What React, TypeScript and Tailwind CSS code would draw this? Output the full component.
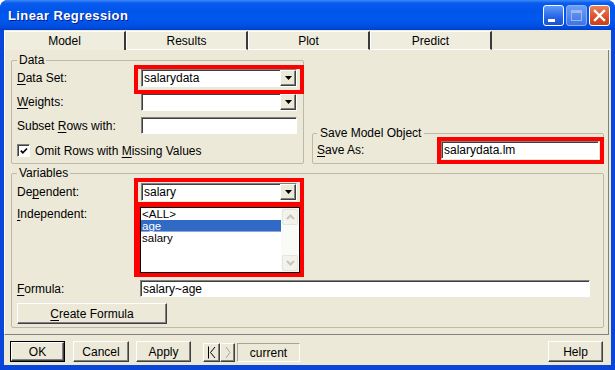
import React from 'react';

type P = { children?: React.ReactNode; className?: string };

// classic 3D edges
const raised =
  'border border-t-white border-l-white border-b-[#404040] border-r-[#404040] shadow-[inset_-1px_-1px_0_#808080]';

function U({ children }: P) {
  return <span className="underline decoration-1 underline-offset-[2px]">{children}</span>;
}

function Sunken({ children, className = '' }: P) {
  return (
    <div className={`border border-t-[#808080] border-l-[#808080] border-b-white border-r-white ${className}`}>
      <div className="flex h-full w-full border-t border-l border-t-[#404040] border-l-[#404040] bg-white">
        {children}
      </div>
    </div>
  );
}

function Combo({ value = '', className = '' }: { value?: string; className?: string }) {
  return (
    <div className={`flex h-[18px] w-[156px] border border-t-[#808080] border-l-[#808080] border-b-white border-r-white bg-white ${className}`}>
      <div className="flex-1 border-t border-l border-t-[#404040] border-l-[#404040] pl-[1px] leading-[15px]">
        {value}
      </div>
      <div className={`flex h-[16px] w-[16px] items-center justify-center bg-[#ece9d8] ${raised}`}>
        <svg width="7" height="4" viewBox="0 0 7 4">
          <polygon points="0,0 7,0 3.5,4" fill="#000" />
        </svg>
      </div>
    </div>
  );
}

function Btn({ children, className = '', def = false }: P & { def?: boolean }) {
  if (def) {
    return (
      <div className={`h-[21px] border border-black ${className}`}>
        <div className={`flex h-full w-full items-center justify-center bg-[#ece9d8] ${raised}`}>{children}</div>
      </div>
    );
  }
  return (
    <div className={`flex h-[21px] items-center justify-center bg-[#ece9d8] ${raised} ${className}`}>
      {children}
    </div>
  );
}

function RedMark({ className = '' }: P) {
  return <div className={`pointer-events-none absolute border-4 border-[#ff0000] ${className}`} />;
}

function ScrollArrow({ up }: { up?: boolean }) {
  return (
    <div className="flex h-[16px] w-[16px] items-center justify-center rounded-[2px] border border-[#e6e4dc] bg-[#f3f3ee]">
      <svg width="9" height="6" viewBox="0 0 9 6">
        <polyline
          points={up ? '1,5 4.5,1.5 8,5' : '1,1 4.5,4.5 8,1'}
          fill="none"
          stroke="#c7c5b8"
          strokeWidth="2"
        />
      </svg>
    </div>
  );
}

function ListBox() {
  const item = 'h-[12px] overflow-hidden pl-[1px] text-[11.5px] leading-[12px]';
  return (
    <div className="flex h-[66px] w-[160px] border border-black bg-white">
      <div className="flex-1">
        <div className={item}>&lt;ALL&gt;</div>
        <div className={`${item} bg-[#316ac5] text-white shadow-[inset_0_-1px_0_#8aa6da]`}>age</div>
        <div className={item}>salary</div>
      </div>
      <div className="flex w-[18px] flex-col justify-between bg-[#fafaf7] py-[1px] pl-[1px]">
        <ScrollArrow up />
        <ScrollArrow />
      </div>
    </div>
  );
}

function TitleBar() {
  return (
    <div className="flex h-[30px] items-center bg-[linear-gradient(180deg,#3d8cf7_0%,#0a5bf0_10%,#0055ea_35%,#0058ee_65%,#004ee0_88%,#0040c8_100%)] pl-[8px] pr-[5px]">
      <div className="mt-[1px] flex-1 text-[13px] font-bold tracking-[0.4px] text-white [text-shadow:1px_1px_0_#0a1a8a]">
        Linear Regression
      </div>
      <div className="flex gap-[2px]">
        <div className="relative h-[21px] w-[21px] rounded-[3px] border border-white bg-[linear-gradient(180deg,#5c9cfb,#2663e6_60%,#1b53d4)]">
          <div className="absolute left-[4px] top-[13px] h-[3px] w-[7px] bg-white" />
        </div>
        <div className="flex h-[21px] w-[21px] items-center justify-center rounded-[3px] border border-[#8fb0f0] bg-[linear-gradient(180deg,#6b9ef5,#3f74e6)]">
          <div className="h-[11px] w-[11px] border border-t-[3px] border-[#9cb8ef]" />
        </div>
        <div className="flex h-[21px] w-[21px] items-center justify-center rounded-[3px] border border-white bg-[linear-gradient(180deg,#e9825d,#d9502a_60%,#c8401c)]">
          <svg width="13" height="13" viewBox="0 0 13 13">
            <path d="M2 2L11 11M11 2L2 11" stroke="#fff" strokeWidth="2.4" strokeLinecap="square" />
          </svg>
        </div>
      </div>
    </div>
  );
}

function Tabs() {
  const tab = 'flex h-[19px] items-center justify-center border-t border-l border-t-white border-l-white border-r-2 border-r-[#3a3a3a] bg-[#efedde]';
  return (
    <div className="flex h-[20px] items-end">
      <div className={`${tab} w-[122px]`}>Model</div>
      <div className={`${tab} w-[122px] border-b border-b-white`}>Results</div>
      <div className={`${tab} w-[122px] border-b border-b-white`}>Plot</div>
      <div className={`${tab} w-[122px] border-b border-b-white`}>Predict</div>
      <div className="h-[1px] flex-1 bg-white" />
    </div>
  );
}

function Panel() {
  const group = 'border border-[#bcb9a8] rounded-[2px]';
  return (
    <div className="h-[285px] w-[605px] border-l border-b border-r border-l-white border-b-[#808080] border-r-[#808080] pl-[6px] pt-[3px]">
      <div className="flex items-end">
        {/* Data */}
        <fieldset className={`h-[111px] w-[293px] pl-[5px] ${group}`}>
          <legend className="px-[2px] leading-[14px]">Data</legend>
          <div className="mt-[2px] flex h-[18px] items-center">
            <div className="w-[124px]">
              <U>D</U>ata Set:
            </div>
            <div className="relative">
              <Combo value="salarydata" />
              <RedMark className="-left-[7px] -top-[4px] -right-[7px] -bottom-[7px]" />
            </div>
          </div>
          <div className="mt-[6px] flex h-[18px] items-center">
            <div className="w-[124px]">
              <U>W</U>eights:
            </div>
            <Combo />
          </div>
          <div className="mt-[6px] flex h-[17px] items-center">
            <div className="w-[124px]">
              Subset <U>R</U>ows with:
            </div>
            <Sunken className="h-[17px] w-[156px]" />
          </div>
          <div className="mt-[10px] flex h-[13px] items-center">
            <Sunken className="h-[13px] w-[13px]">
              <svg width="11" height="11" viewBox="0 0 11 11">
                <path d="M2 4.5L4.2 7L8.8 2.2" fill="none" stroke="#000" strokeWidth="1.8" />
              </svg>
            </Sunken>
            <div className="ml-[5px]">
              Omit Rows with <U>M</U>issing Values
            </div>
          </div>
        </fieldset>

        {/* Save Model Object */}
        <fieldset className={`ml-[8px] h-[38px] w-[292px] pl-[4px] ${group}`}>
          <legend className="px-[3px] leading-[14px]">Save Model Object</legend>
          <div className="mt-[1px] flex h-[18px] items-center">
            <div className="w-[124px]">
              <U>S</U>ave As:
            </div>
            <div className="relative">
              <Sunken className="h-[18px] w-[158px]">
                <div className="pl-[1px] leading-[15px]">salarydata.lm</div>
              </Sunken>
              <RedMark className="-left-[4px] -top-[4px] -right-[5px] -bottom-[5px]" />
            </div>
          </div>
        </fieldset>
      </div>

      {/* Variables */}
      <fieldset className={`mt-[2px] h-[162px] w-[593px] pl-[5px] ${group}`}>
        <legend className="px-[2px] leading-[14px]">Variables</legend>
        <div className="mt-[3px] flex">
          <div className="w-[123px]">
            <div className="flex h-[18px] items-center">
              De<U>p</U>endent:
            </div>
            <div className="mt-[6px] leading-[14px]">
              <U>I</U>ndependent:
            </div>
          </div>
          <div className="relative">
            <Combo value="salary" className="ml-[1px]" />
            <div className="mt-[6px]">
              <ListBox />
            </div>
            <RedMark className="-left-[6px] -top-[5px] -right-[4px] -bottom-[4px]" />
            <div className="pointer-events-none absolute -left-[6px] -right-[4px] top-[19px] h-[5px] bg-[#ff0000]" />
            <div className="pointer-events-none absolute -left-[2px] top-[24px] bottom-0 w-[2px] bg-[#ff0000]" />
          </div>
        </div>
        <div className="mt-[7px] flex h-[17px] items-center">
          <div className="w-[123px]">
            <U>F</U>ormula:
          </div>
          <Sunken className="h-[17px] w-[450px]">
            <div className="pl-[1px] leading-[14px]">salary~age</div>
          </Sunken>
        </div>
        <Btn className="mt-[6px] h-[20px] w-[150px]">
          <span>
            <U>C</U>reate Formula
          </span>
        </Btn>
      </fieldset>
    </div>
  );
}

function Footer() {
  return (
    <div className="mt-[6px] flex h-[21px] items-end pl-[6px]">
      <Btn def className="w-[55px]">OK</Btn>
      <Btn className="ml-[8px] w-[56px]">Cancel</Btn>
      <Btn className="ml-[7px] w-[55px]">Apply</Btn>
      <div className={`ml-[12px] flex h-[19px] w-[17px] items-center justify-center bg-[#ece9d8] ${raised}`}>
        <svg width="9" height="13" viewBox="0 0 9 13">
          <path d="M1.5 0.5V12.5" stroke="#000" strokeWidth="1" />
          <polyline points="8,1 3.5,6.5 8,12" fill="none" stroke="#000" strokeWidth="1" />
        </svg>
      </div>
      <div className={`flex h-[19px] w-[15px] items-center justify-center bg-[#ece9d8] ${raised}`}>
        <svg width="6" height="13" viewBox="0 0 6 13">
          <polyline points="1,1 5,6.5 1,12" fill="none" stroke="#a7a597" strokeWidth="1" />
        </svg>
      </div>
      <div className="ml-[2px] flex h-[19px] w-[63px] items-center justify-center border border-t-[#a8a595] border-l-[#a8a595] border-b-white border-r-white">
        current
      </div>
      <Btn className="ml-auto mr-[8px] w-[55px]">Help</Btn>
    </div>
  );
}

export default function App() {
  return (
    <div className="h-[370px] w-[615px] select-none bg-white font-['Liberation_Sans',Arial,sans-serif] text-[12px] leading-[14px] text-black">
      <div className="flex h-full w-full flex-col overflow-hidden rounded-t-[8px] bg-[#0a46d8]">
        <TitleBar />
        <div className="mx-[4px] mb-[5px] flex flex-1 flex-col bg-[#ece9d8]">
          <Tabs />
          <Panel />
          <Footer />
        </div>
      </div>
    </div>
  );
}
